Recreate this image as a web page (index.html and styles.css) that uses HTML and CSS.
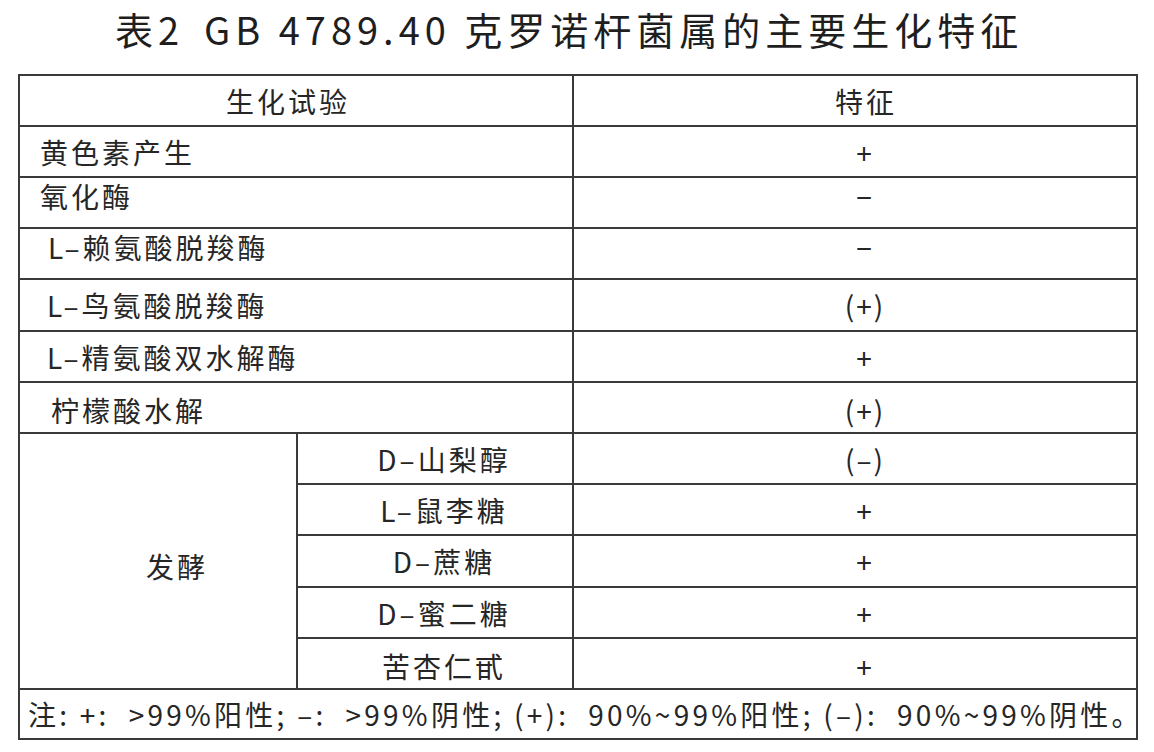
FILE: index.html
```html
<!DOCTYPE html>
<html lang="zh-CN">
<head>
<meta charset="utf-8">
<title>表2 GB 4789.40 克罗诺杆菌属的主要生化特征</title>
<link rel="stylesheet" href="styles.css">
</head>
<body>
<h1 class="title">表2<span class="gap"></span>GB 4789.40 克罗诺杆菌属的主要生化特征</h1>
<table class="bio">
  <colgroup>
    <col class="c1">
    <col class="c2">
    <col class="c3">
  </colgroup>
  <tr class="head">
    <th colspan="2" class="h-left">生化试验</th>
    <th class="h-right">特征</th>
  </tr>
  <tr>
    <td colspan="2" class="name p20">黄色素产生</td>
    <td class="val">+</td>
  </tr>
  <tr class="high">
    <td colspan="2" class="name p20">氧化酶</td>
    <td class="val">−</td>
  </tr>
  <tr class="high">
    <td colspan="2" class="name p28">L–赖氨酸脱羧酶</td>
    <td class="val">−</td>
  </tr>
  <tr class="tall">
    <td colspan="2" class="name p27">L–鸟氨酸脱羧酶</td>
    <td class="val paren">(+)</td>
  </tr>
  <tr>
    <td colspan="2" class="name p27">L–精氨酸双水解酶</td>
    <td class="val">+</td>
  </tr>
  <tr class="low">
    <td colspan="2" class="name p32">柠檬酸水解</td>
    <td class="val paren">(+)</td>
  </tr>
  <tr>
    <td rowspan="5" class="group">发酵</td>
    <td class="sub">D–山梨醇</td>
    <td class="val paren">(–)</td>
  </tr>
  <tr>
    <td class="sub">L–鼠李糖</td>
    <td class="val">+</td>
  </tr>
  <tr class="tall">
    <td class="sub">D–蔗糖</td>
    <td class="val">+</td>
  </tr>
  <tr>
    <td class="sub">D–蜜二糖</td>
    <td class="val">+</td>
  </tr>
  <tr class="low">
    <td class="sub">苦杏仁甙</td>
    <td class="val">+</td>
  </tr>
  <tr class="note">
    <td colspan="3">注: +:&nbsp; &gt;99%阳性; –:&nbsp; &gt;99%阴性; (+):&nbsp; 90%~99%阳性; (–):&nbsp; 90%~99%阴性。</td>
  </tr>
</table>
</body>
</html>
```

FILE: styles.css
```css
html, body {
  margin: 0;
  padding: 0;
  background: #ffffff;
}

body {
  font-family: "Noto Sans CJK SC", "Noto Sans", "DejaVu Sans", sans-serif;
  color: #262626;
  width: 1154px;
  height: 752px;
  overflow: hidden;
}

.title {
  margin: 0;
  height: 74px;
  box-sizing: border-box;
  padding: 3px 0 0 115px;
  font-size: 38px;
  font-weight: 400;
  line-height: 52px;
  letter-spacing: 5px;
  white-space: nowrap;
  color: #1e1e1e;
}

.title .gap {
  display: inline-block;
  width: 20px;
}

.bio {
  border-collapse: collapse;
  table-layout: fixed;
  margin-left: 18px;
  width: 1118px;
  font-size: 28px;
  letter-spacing: 3px;
}

.bio col.c1 { width: 278px; }
.bio col.c2 { width: 276px; }
.bio col.c3 { width: 564px; }

.bio th,
.bio td {
  border: 2px solid #3a3a3a;
  height: 49px;
  padding: 0;
  font-weight: 400;
  line-height: 34px;
  white-space: nowrap;
  vertical-align: middle;
}

.bio tr.tall td {
  height: 50px;
}

.bio th.h-left {
  text-align: center;
  padding-right: 16px;
}

.bio th.h-right {
  text-align: center;
  padding-left: 22px;
}

.bio td.name {
  text-align: left;
}

.bio td.p20 { padding-left: 20px; }
.bio td.p27 { padding-left: 27px; }
.bio td.p28 { padding-left: 28px; }
.bio td.p32 { padding-left: 31px; }

.bio td.val {
  text-align: center;
  padding-left: 18px;
  letter-spacing: 0;
}

.bio td.paren {
  letter-spacing: 2px;
  padding-left: 20px;
}

.bio tr.high td {
  padding-bottom: 14px;
  height: 35px;
}

.bio tr.low td {
  padding-top: 5px;
  height: 44px;
}

.bio td.group {
  text-align: center;
  padding-left: 38px;
  padding-top: 10px;
}

.bio td.sub {
  text-align: center;
  padding-left: 18px;
}

.bio tr.note td {
  height: 48px;
  padding-left: 8px;
  font-size: 28px;
  letter-spacing: 3.25px;
  text-align: left;
}
```
